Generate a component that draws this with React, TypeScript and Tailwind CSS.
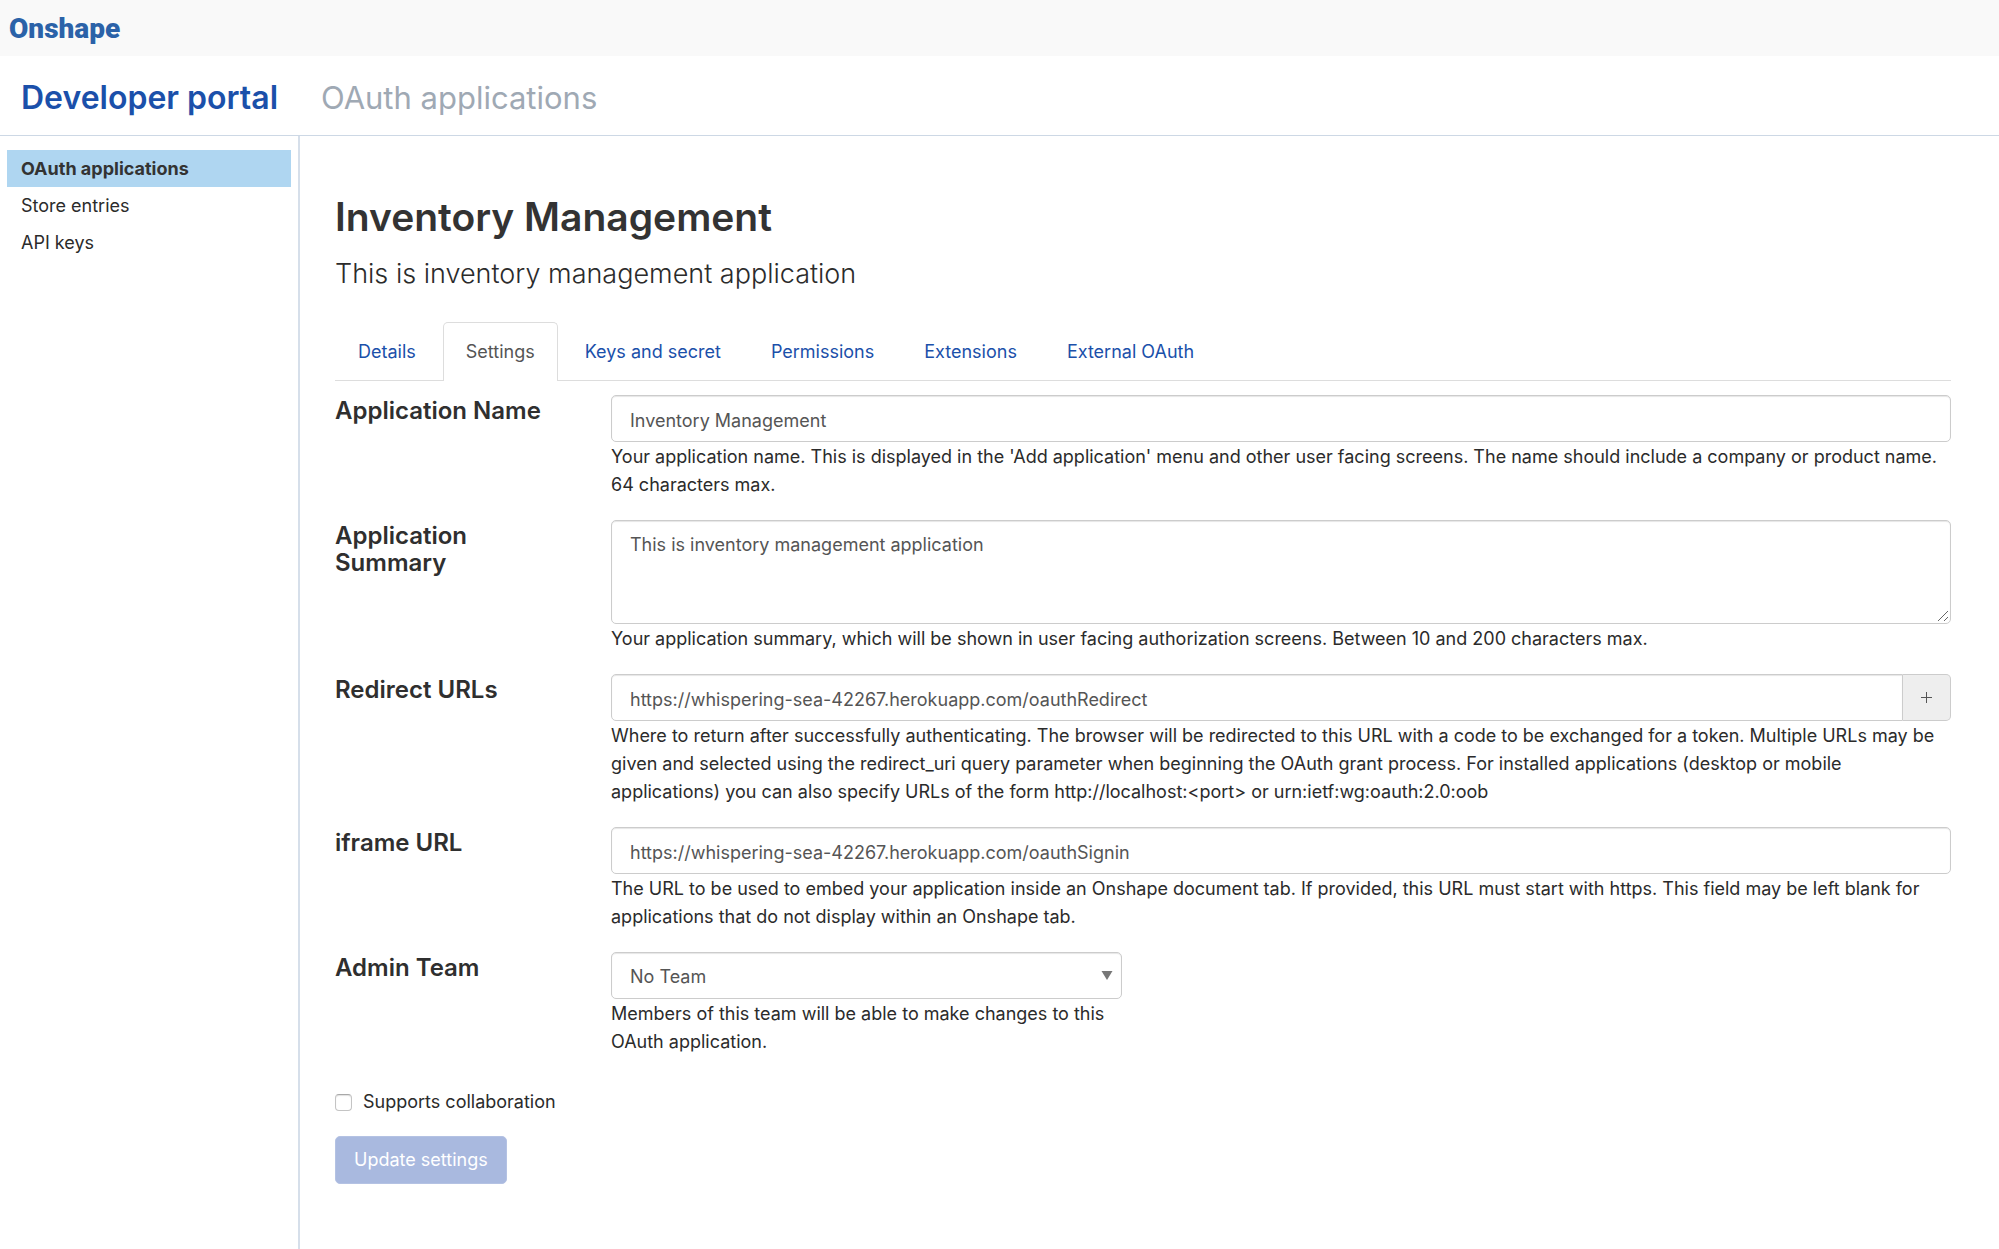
import React from "react";

const control =
  "block w-full rounded-[5px] border border-[#cccccc] bg-white px-[18px] text-[18px] text-[#555555] shadow-[inset_0_1px_1px_rgba(0,0,0,0.1)] outline-none focus:border-[#66afe9]";
const singleLine = "h-[47px] pt-[3px]";

const navItems = ["OAuth applications", "Store entries", "API keys"];
const tabs = ["Details", "Settings", "Keys and secret", "Permissions", "Extensions", "External OAuth"];

type FieldProps = {
  id: string;
  label: string;
  help: string;
  narrow?: boolean;
  children: React.ReactNode;
};

function Field({ id, label, help, narrow, children }: FieldProps) {
  return (
    <div className="flex">
      <div className="w-[276px] shrink-0 pt-[2px] pr-14">
        <label htmlFor={id} className="block text-[24px] leading-[27px] font-semibold text-[#2f2f2f]">
          {label}
        </label>
      </div>
      <div className={narrow ? "w-full max-w-[511px]" : "min-w-0 flex-1"}>
        {children}
        <p id={`${id}-help`} className="pt-px leading-[28px]">
          {help}
        </p>
      </div>
    </div>
  );
}

export default function App() {
  return (
    <div className="flex min-h-screen flex-col bg-white font-['Inter',sans-serif] text-[18px] leading-[28px] text-[#2b2b2b]">
      <header>
        <div className="flex h-14 items-center bg-[#f9f9f9] px-[9px] pt-[2px]">
          <a href="#" className="font-['Roboto',sans-serif] text-[28px] leading-none font-black text-[#2b62a8]">
            Onshape
          </a>
        </div>
        <div className="flex h-20 items-center gap-[43px] border-b border-[#cdd8e5] px-[21px] pt-1 leading-none">
          <a href="#" className="text-[32px] font-semibold text-[#1b50aa]">
            Developer portal
          </a>
          <span className="text-[31px] text-[#9fa9b4]">OAuth applications</span>
        </div>
      </header>

      <div className="flex flex-1">
        <nav aria-label="Developer portal" className="w-[300px] shrink-0 border-r-2 border-[#d6dfea] pt-[14px] pr-[7px] pl-[7px]">
          <ul>
            {navItems.map((item, i) => (
              <li key={item}>
                <a
                  href="#"
                  className={
                    i === 0
                      ? "block bg-[#afd6f1] px-[14px] leading-[37px] font-bold text-[#333333]"
                      : "block px-[14px] leading-[37px]"
                  }
                >
                  {item}
                </a>
              </li>
            ))}
          </ul>
        </nav>

        <main className="min-w-0 flex-1 pt-14 pr-12 pb-14 pl-[35px]">
          <h1 className="text-[39px] leading-[50px] font-semibold text-[#333333]">Inventory Management</h1>
          <p className="mt-3 text-[27px] leading-10 font-light">This is inventory management application</p>

          <div role="tablist" className="mt-7 flex gap-1 border-b border-[#dddddd]">
            {tabs.map((tab) => (
              <button
                key={tab}
                type="button"
                role="tab"
                aria-selected={tab === "Settings"}
                className={
                  tab === "Settings"
                    ? "-mb-px h-[59px] rounded-t-[5px] border border-b-0 border-[#dddddd] bg-white px-[22px] text-[#555555]"
                    : "h-[58px] px-[23px] pt-[2px] text-[#1b50aa]"
                }
              >
                {tab}
              </button>
            ))}
          </div>

          <form className="mt-[14px]" onSubmit={(e) => e.preventDefault()}>
            <div className="flex flex-col gap-[21px]">
              <Field
                id="app-name"
                label="Application Name"
                help="Your application name. This is displayed in the 'Add application' menu and other user facing screens. The name should include a company or product name. 64 characters max."
              >
                <input id="app-name" type="text" defaultValue="Inventory Management" className={`${control} ${singleLine}`} />
              </Field>

              <Field
                id="app-summary"
                label="Application Summary"
                help="Your application summary, which will be shown in user facing authorization screens. Between 10 and 200 characters max."
              >
                <div className="relative">
                  <textarea
                    id="app-summary"
                    defaultValue="This is inventory management application"
                    className={`${control} h-[104px] resize-y pt-[10px] leading-[28px] [&::-webkit-resizer]:bg-transparent`}
                  />
                  <svg
                    width="12"
                    height="12"
                    viewBox="0 0 12 12"
                    aria-hidden="true"
                    className="pointer-events-none absolute right-[2px] bottom-[2px]"
                  >
                    <path d="M1 11L11 1M7 11l4-4" stroke="#666666" fill="none" />
                  </svg>
                </div>
              </Field>

              <Field
                id="redirect-urls"
                label="Redirect URLs"
                help="Where to return after successfully authenticating. The browser will be redirected to this URL with a code to be exchanged for a token. Multiple URLs may be given and selected using the redirect_uri query parameter when beginning the OAuth grant process. For installed applications (desktop or mobile applications) you can also specify URLs of the form http://localhost:<port> or urn:ietf:wg:oauth:2.0:oob"
              >
                <div className="flex">
                  <input
                    id="redirect-urls"
                    type="text"
                    defaultValue="https://whispering-sea-42267.herokuapp.com/oauthRedirect"
                    className={`${control} ${singleLine} min-w-0 flex-1 rounded-r-none`}
                  />
                  <button
                    type="button"
                    aria-label="Add redirect URL"
                    className="flex w-12 items-center justify-center rounded-r-[5px] border border-l-0 border-[#cccccc] bg-[#eeeeee] text-[#555555]"
                  >
                    <svg width="11" height="11" viewBox="0 0 11 11" aria-hidden="true">
                      <path d="M5.5 0v11M0 5.5h11" stroke="currentColor" fill="none" />
                    </svg>
                  </button>
                </div>
              </Field>

              <Field
                id="iframe-url"
                label="iframe URL"
                help="The URL to be used to embed your application inside an Onshape document tab. If provided, this URL must start with https. This field may be left blank for applications that do not display within an Onshape tab."
              >
                <input
                  id="iframe-url"
                  type="text"
                  defaultValue="https://whispering-sea-42267.herokuapp.com/oauthSignin"
                  className={`${control} ${singleLine}`}
                />
              </Field>

              <Field
                id="admin-team"
                label="Admin Team"
                narrow
                help="Members of this team will be able to make changes to this OAuth application."
              >
                <div className="relative">
                  <select id="admin-team" className={`${control} ${singleLine} appearance-none`}>
                    <option>No Team</option>
                  </select>
                  <svg
                    width="12"
                    height="9"
                    viewBox="0 0 12 9"
                    aria-hidden="true"
                    className="pointer-events-none absolute top-[19px] right-[9px]"
                  >
                    <path d="M0.5 0h11L6 9z" fill="#777777" />
                  </svg>
                </div>
              </Field>
            </div>

            <div className="mt-8 flex items-center gap-[11px]">
              <input
                id="collaboration"
                type="checkbox"
                className="size-[17px] appearance-none rounded-[4px] border border-[#c4c4c4] border-t-[#a8a8a8] bg-white shadow-[inset_0_1px_1px_rgba(0,0,0,0.12)] checked:bg-[#1b50aa]"
              />
              <label htmlFor="collaboration">Supports collaboration</label>
            </div>

            <button
              type="submit"
              disabled
              className="mt-5 h-12 rounded-[5px] border border-[#b4c2e3] bg-[#a9b9df] px-[18px] text-white"
            >
              Update settings
            </button>
          </form>
        </main>
      </div>
    </div>
  );
}
